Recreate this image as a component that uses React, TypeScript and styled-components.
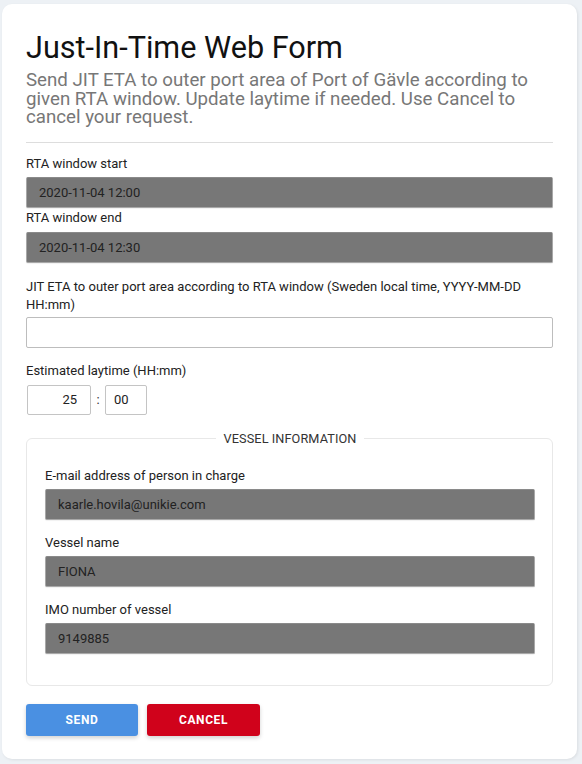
import React from "react";
import styled, { createGlobalStyle } from "styled-components";

const Global = createGlobalStyle`
  html, body { margin: 0; padding: 0; background: #edf1f5; }
  body { font-family: Roboto, "Liberation Sans", Arial, sans-serif; }
  * { box-sizing: border-box; }
`;

const Page = styled.div`
  padding: 4px 5px 5px 2px;
`;

const Card = styled.div`
  background: #ffffff;
  border-radius: 10px;
  box-shadow: 1px 1px 3px rgba(0, 0, 0, 0.08);
  padding: 25px 24px 23px 24px;
  display: flex;
  flex-direction: column;
`;

const Title = styled.h1`
  margin: 0;
  font-size: 30.6px;
  line-height: 38px;
  font-weight: 400;
  color: #111111;
`;

const Subtitle = styled.p`
  margin: 4px 0 0 0;
  font-size: 18.7px;
  line-height: 18.5px;
  color: #777777;
`;

const Divider = styled.hr`
  margin: 15px 0 12px 0;
  border: none;
  border-top: 1px solid #dddddd;
  height: 0;
`;

const Field = styled.div<{ $gap?: number }>`
  display: flex;
  flex-direction: column;
  margin-top: ${(p) => p.$gap ?? 0}px;
`;

const Label = styled.label<{ $mb?: number }>`
  font-size: 13px;
  line-height: 18.5px;
  color: #222222;
  margin-bottom: ${(p) => p.$mb ?? 3.5}px;
`;

const Input = styled.input<{ $filled?: boolean }>`
  height: 31px;
  width: 100%;
  font-family: Roboto, "Liberation Sans", Arial, sans-serif;
  font-size: 13px;
  color: #222222;
  padding: 0 12px;
  border-radius: 2px;
  outline: none;
  background: ${(p) => (p.$filled ? "#777777" : "#ffffff")};
  border: 1px solid ${(p) => (p.$filled ? "#a8a8a8" : "#bdbdbd")};
  border-top-color: ${(p) => (p.$filled ? "#8a8a8a" : "#bdbdbd")};
  box-shadow: ${(p) => (p.$filled ? "0 1px 1px rgba(0,0,0,0.06)" : "none")};
`;

const TimeRow = styled.div`
  display: flex;
  align-items: center;
  margin-left: 1px;
`;

const TimeInput = styled.input<{ $w: number; $align: "left" | "right" }>`
  width: ${(p) => p.$w}px;
  height: 30px;
  font-family: Roboto, "Liberation Sans", Arial, sans-serif;
  font-size: 13px;
  color: #222222;
  text-align: ${(p) => p.$align};
  padding: ${(p) => (p.$align === "right" ? "0 13px 0 6px" : "0 6px 0 8px")};
  border: 1px solid #c4c4c4;
  border-radius: 2px;
  background: #ffffff;
  outline: none;
`;

const Colon = styled.span`
  font-size: 13px;
  color: #333333;
  width: 14px;
  text-align: center;
`;

const Fieldset = styled.fieldset`
  margin: 17px 0 0 0;
  border: 1px solid #e8e8e8;
  border-radius: 6px;
  padding: 21px 17px 31px 18px;
  min-width: 0;
`;

const Legend = styled.legend`
  margin: 0 auto;
  padding: 0 8px;
  font-size: 12.7px;
  line-height: 14px;
  color: #333333;
  text-transform: uppercase;
  letter-spacing: 0.1px;
`;

const Buttons = styled.div`
  display: flex;
  gap: 9px;
  margin-top: 18px;
`;

const Button = styled.button<{ $color: string; $w: number }>`
  width: ${(p) => p.$w}px;
  height: 32px;
  border: none;
  border-radius: 3px;
  background: ${(p) => p.$color};
  color: #ffffff;
  font-family: Roboto, "Liberation Sans", Arial, sans-serif;
  font-size: 12px;
  font-weight: 700;
  letter-spacing: 0.6px;
  box-shadow: 0 2px 4px rgba(0, 0, 0, 0.18);
  cursor: pointer;
`;

export default function App() {
  return (
    <>
      <Global />
      <Page>
        <Card>
          <Title>Just-In-Time Web Form</Title>
          <Subtitle>
            Send JIT ETA to outer port area of Port of Gävle according to given RTA window. Update
            laytime if needed. Use Cancel to cancel your request.
          </Subtitle>
          <Divider />
          <Field>
            <Label>RTA window start</Label>
            <Input $filled readOnly defaultValue="2020-11-04 12:00" />
          </Field>
          <Field $gap={1}>
            <Label $mb={4.5}>RTA window end</Label>
            <Input $filled readOnly defaultValue="2020-11-04 12:30" />
          </Field>
          <Field $gap={15}>
            <Label $mb={2}>
              JIT ETA to outer port area according to RTA window (Sweden local time, YYYY-MM-DD
              HH:mm)
            </Label>
            <Input />
          </Field>
          <Field $gap={14}>
            <Label $mb={4.5}>Estimated laytime (HH:mm)</Label>
            <TimeRow>
              <TimeInput $w={64} $align="right" defaultValue="25" />
              <Colon>:</Colon>
              <TimeInput $w={42} $align="left" defaultValue="00" />
            </TimeRow>
          </Field>
          <Fieldset>
            <Legend>Vessel information</Legend>
            <Field>
              <Label>E-mail address of person in charge</Label>
              <Input $filled readOnly defaultValue="kaarle.hovila@unikie.com" />
            </Field>
            <Field $gap={14}>
              <Label>Vessel name</Label>
              <Input $filled readOnly defaultValue="FIONA" />
            </Field>
            <Field $gap={14}>
              <Label>IMO number of vessel</Label>
              <Input $filled readOnly defaultValue="9149885" />
            </Field>
          </Fieldset>
          <Buttons>
            <Button $color="#4a90e2" $w={112}>SEND</Button>
            <Button $color="#d0021b" $w={113}>CANCEL</Button>
          </Buttons>
        </Card>
      </Page>
    </>
  );
}
